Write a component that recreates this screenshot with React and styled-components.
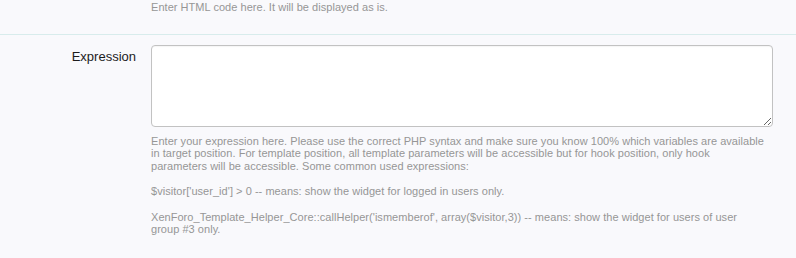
import React from "react";
import styled, { createGlobalStyle } from "styled-components";

const GlobalStyle = createGlobalStyle`
  html, body {
    margin: 0;
    padding: 0;
    background: #f9f9fc;
  }
  body {
    font-family: "Liberation Sans", Arial, sans-serif;
  }
`;

const Form = styled.div`
  width: 796px;
  overflow: hidden;
`;

const CtrlUnit = styled.div`
  display: grid;
  grid-template-columns: 136px 622px;
  column-gap: 15px;
  padding: ${(p) => p.$pad || "10px 0 0"};
  border-bottom: ${(p) => (p.$divider ? "1px solid #d8ecec" : "none")};
`;

const Label = styled.div`
  text-align: right;
  font-size: 13px;
  line-height: 16px;
  color: #1c1c1c;
  padding-top: 4px;
`;

const Field = styled.div`
  display: flex;
  flex-direction: column;
`;

const TextArea = styled.textarea`
  box-sizing: border-box;
  width: 622px;
  height: 82px;
  margin: 0;
  border: 1px solid #c2c2c2;
  border-radius: 4px;
  background: #fff;
  box-shadow: inset 0 1px 1px rgba(0, 0, 0, 0.04);
  font-family: "Liberation Sans", Arial, sans-serif;
  font-size: 12px;
  resize: vertical;
  outline: none;
`;

const Explain = styled.div`
  margin-top: ${(p) => p.$gap || "8px"};
  font-size: 11px;
  line-height: 12.67px;
  letter-spacing: 0.04px;
  color: #969696;
  white-space: nowrap;
`;

export default function App() {
  return (
    <Form>
      <GlobalStyle />
      <CtrlUnit $divider $pad="1px 0 20px">
        <div />
        <Explain $gap="0">Enter HTML code here. It will be displayed as is.</Explain>
      </CtrlUnit>
      <CtrlUnit $pad="10px 0 0">
        <Label>Expression</Label>
        <Field>
          <TextArea />
          <Explain>
            Enter your expression here. Please use the correct PHP syntax and make sure you know 100% which variables are available
            <br />
            in target position. For template position, all template parameters will be accessible but for hook position, only hook
            <br />
            parameters will be accessible. Some common used expressions:
            <br />
            <br />
            $visitor['user_id'] &gt; 0 -- means: show the widget for logged in users only.
            <br />
            <br />
            XenForo_Template_Helper_Core::callHelper('ismemberof', array($visitor,3)) -- means: show the widget for users of user
            <br />
            group #3 only.
          </Explain>
        </Field>
      </CtrlUnit>
    </Form>
  );
}
